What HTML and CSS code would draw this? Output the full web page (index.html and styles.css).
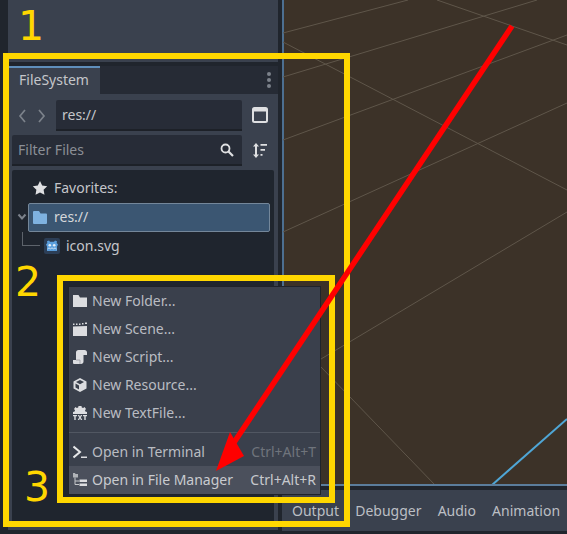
FILE: index.html
```html
<!DOCTYPE html>
<html lang="en">
<head>
<meta charset="utf-8">
<title>Godot FileSystem dock</title>
<link rel="stylesheet" href="styles.css">
</head>
<body>
<div class="app">
  <aside class="left">
    <div class="top-panel"></div>
    <section class="dock">
      <div class="tabbar">
        <div class="tab">FileSystem</div>
        <svg class="kebab" width="4" height="16" viewBox="0 0 4 16"><circle cx="2" cy="2" r="2"/><circle cx="2" cy="8" r="2"/><circle cx="2" cy="14" r="2"/></svg>
      </div>
      <div class="dock-body">
        <div class="path-row">
          <div class="nav">
            <svg width="10" height="16" viewBox="0 0 10 16"><path d="M8 2 3 8l5 6" /></svg>
            <svg width="10" height="16" viewBox="0 0 10 16"><path d="M2 2l5 6-5 6" /></svg>
          </div>
          <div class="field path">res://</div>
          <svg class="tool raise" width="16" height="16" viewBox="0 0 16 16"><rect x="1" y="1" width="14" height="14" rx="1.5" class="win"/><rect x="1" y="1" width="14" height="3.5" class="winbar"/></svg>
        </div>
        <div class="filter-row">
          <div class="field filter"><span>Filter Files</span>
            <svg width="14" height="14" viewBox="0 0 14 14"><circle cx="5.5" cy="5.5" r="4" class="lens"/><path d="M8.5 8.5 13 13" class="handle"/></svg>
          </div>
          <svg class="tool" width="16" height="15" viewBox="0 0 16 15"><path d="M4 0 1 3.500h2v8H1L4 15l3-3.500H5v-8h2z" class="solid"/><path d="M8.500 1h6.500v1.800H8.500zM8.500 6h4.500v1.800H8.500zM8.500 11h2v1.800h-2z" class="solid"/></svg>
        </div>
        <div class="tree">
          <div class="row fav">
            <svg width="16" height="16" viewBox="0 0 16 16"><path d="m8 1 2.200 4.600 5 .7-3.600 3.500.9 5L8 12.400l-4.500 2.400.9-5L.8 6.300l5-.7z" class="solid"/></svg>
            <span>Favorites:</span>
          </div>
          <div class="row root">
            <svg class="chev" width="10" height="8" viewBox="0 0 10 8"><path d="M1.500 1.500 5 5.500l3.500-4"/></svg>
            <div class="selected">
              <svg width="14" height="13" viewBox="0 0 14 13"><path d="M1 0h5l1.500 2.500H13a1 1 0 0 1 1 1V12a1 1 0 0 1-1 1H1a1 1 0 0 1-1-1V1a1 1 0 0 1 1-1z" class="folder"/></svg>
              <span class="lift">res://</span>
            </div>
          </div>
          <div class="row file">
            <div class="branch"></div>
            <div class="godot">
              <svg width="12" height="12" viewBox="0 0 12 12"><path d="M3 .5l1 1.300h4L9 .5l2 .8-.3 1.700L12 4.500 11 6.500V11H1V6.500L0 4.500 1.300 3 1 1.300z" class="gd"/><circle cx="3.800" cy="5.300" r="1.300" class="gd-eye"/><circle cx="8.200" cy="5.300" r="1.300" class="gd-eye"/><path d="M1.500 9c1.500-1.200 2-1.200 3 0 1-1.200 2-1.200 3 0 1-1.200 1.500-1.200 3 0" class="gd-mouth"/></svg>
            </div>
            <span class="lift">icon.svg</span>
          </div>
          <div class="menu">
            <div class="item"><svg width="14" height="14" viewBox="0 0 14 14"><path d="M0 1h5.500l1.500 2.500h7V13H0z" class="mi"/></svg><span>New Folder...</span></div>
            <div class="item"><svg width="14" height="14" viewBox="0 0 14 14"><path d="M0 4.500l14-.5v10H0z" class="mi"/><path d="M0 1.500h1.500V3H0zM3 1.500h1.500V3H3zM6 1.500h1.500V3H6zM9 1h1.500v1.500H9zM12 .5h2V2h-2z" class="mi"/></svg><span>New Scene...</span></div>
            <div class="item"><svg width="14" height="14" viewBox="0 0 14 14"><path d="M5.500 0h6C13 0 14 1 14 2.500V5h-3.500v6.500c0 1.500-1 2.500-2.500 2.500H1.500C.5 14 0 13.500 0 12.500V10h3V2.500C3 1 4 0 5.500 0z" class="mi"/><path d="M3 10h4v4" class="cut"/></svg><span>New Script...</span></div>
            <div class="item"><svg width="14" height="14" viewBox="0 0 14 14"><path d="M7 0 13.500 3.500v7L7 14 .5 10.500v-7zM7 6.200 11 4 7 2 3 4zM2.500 5.600v4L6 11.600V7.500z" class="mi" fill-rule="evenodd"/></svg><span>New Resource...</span></div>
            <div class="item"><svg width="14" height="14" viewBox="0 0 14 14"><path d="M5.500 0h3l.3 1.500 1.400.6L11.500 1 13 3l-1 1.200.4 1.300L14 6v2H0V6l1.600-.5L2 4.200 1 3l1.500-2 1.300 1.100 1.400-.6z" class="mi"/><path d="M0 9h4v1.200H2.700V14H1.300v-3.800H0zM4.700 9h1.500L7 10.800 7.800 9h1.500L7.800 11.500 9.300 14H7.800L7 12.300 6.200 14H4.700l1.500-2.500zM10 9h4v1.200h-1.300V14h-1.400v-3.800H10z" class="mi"/></svg><span>New TextFile...</span></div>
            <div class="sep"></div>
            <div class="item"><svg width="14" height="14" viewBox="0 0 14 14"><path d="M.5 1.500 7 7 .5 12.500" class="term"/><path d="M8 11.500h6V13H8z" class="mi"/></svg><span>Open in Terminal</span><kbd class="off">Ctrl+Alt+T</kbd></div>
            <div class="item active"><svg width="14" height="14" viewBox="0 0 14 14"><path d="M0 0h2l.5 1H5v3.500H0z" class="mi-dim"/><path d="M2 4.500v7h4M2 8h4" class="tline"/><path d="M6.500 6.500H14v2.500H6.500zM6.500 10.500H14V13H6.500z" class="mi"/></svg><span>Open in File Manager</span><kbd>Ctrl+Alt+R</kbd></div>
          </div>
        </div>
      </div>
    </section>
  </aside>
  <main class="right">
    <div class="viewport">
      <svg class="grid" width="284" height="484" viewBox="283 0 284 484">
        <path d="M283 33 408 0M283 77 537 0M283 140 567 35M283 232 567 103M321 359 567 212M437 0 567 45M283 42 567 190M321 367 435 485"/>
        <path class="axis" d="M492 485 567 419"/>
      </svg>
    </div>
    <nav class="bottom">
      <span>Output</span><span>Debugger</span><span>Audio</span><span>Animation</span>
    </nav>
  </main>
</div>
<svg class="marks" width="567" height="534" viewBox="0 0 567 534">
  <rect class="box" x="6" y="56" width="341" height="468"/>
  <rect class="box" x="60" y="278" width="272" height="222"/>
  <path class="arrow-line" d="M512 26 231 447"/>
  <path class="arrow-head" d="M216 471 230 432 244 456z"/>
</svg>
<div class="num n1">1</div>
<div class="num n2">2</div>
<div class="num n3">3</div>
</body>
</html>
```
FILE: styles.css
```css
* { box-sizing: border-box; }
html, body { margin: 0; height: 100%; }
body {
  width: 567px;
  height: 534px;
  overflow: hidden;
  position: relative;
  background: #20252d;
  font-family: "Noto Sans", sans-serif;
  font-size: 14px;
  color: #c4c6ca;
}
svg { display: block; flex: none; }
.app { display: flex; height: 534px; }
.left { width: 282px; padding: 0 4px 4px 8px; display: flex; flex-direction: column; gap: 4px; }
.top-panel { height: 62px; background: #3a414e; }
.dock { flex: 1; display: flex; flex-direction: column; background: #3a414e; min-height: 0; }
.tabbar { height: 28px; background: #262b35; display: flex; justify-content: space-between; align-items: center; padding-right: 7px; flex: none; }
.kebab { fill: #7c828b; }
.tab { width: 92px; height: 28px; background: #3a414e; border-top: 2px solid #5f8fbb; padding: 0 0 0 11px; line-height: 23px; }
.dock-body { flex: 1; display: flex; flex-direction: column; padding: 6px 4px 4px; gap: 4px; min-height: 0; }
.path-row, .filter-row { display: flex; align-items: center; height: 31px; flex: none; }
.nav { width: 44px; display: flex; justify-content: space-between; padding: 0 9px 0 5px; flex: none; }
.nav path { fill: none; stroke: #7c828b; stroke-width: 1.7; }
.field { background: #272c37; border-bottom: 2px solid #1d2128; height: 31px; border-radius: 2px 2px 0 0; display: flex; align-items: center; }
.path { width: 186px; padding-left: 6px; }
.filter { width: 230px; padding: 0 8px 0 6px; justify-content: space-between; color: #8b8f96; }
.tool { margin-left: 10px; }
.raise { margin-bottom: 1px; }
.win { fill: none; stroke: #dfe0e2; stroke-width: 2; }
.winbar { fill: #dfe0e2; }
.lens { fill: none; stroke: #dfe0e2; stroke-width: 1.8; }
.handle { fill: none; stroke: #dfe0e2; stroke-width: 2.2; }
.solid { fill: #dfe0e2; }
.tree { flex: 1; width: 262px; background: #1f252e; border-radius: 2px 2px 0 0; padding-top: 4px; position: relative; }
.row { display: flex; align-items: center; height: 28px; }
.lift { padding-bottom: 2px; }
.fav { padding-left: 20px; gap: 6px; margin-bottom: 1px; padding-bottom: 1px; }
.root { position: relative; height: 29px; padding: 0 4px 0 16px; }
.chev { position: absolute; left: 5px; top: 10px; }
.chev path { fill: none; stroke: #7c828b; stroke-width: 2; }
.selected { flex: 1; height: 29px; background: #3b5672; border: 1px solid #74879a; border-radius: 2px; display: flex; align-items: center; gap: 7px; padding: 0 0 0 4px; color: #d5d7da; }
.folder { fill: #7fb2e0; }
.file { position: relative; padding-left: 32px; gap: 6px; }
.branch { position: absolute; left: 10px; top: 0; width: 18px; height: 14px; border-left: 1px solid #5d636b; border-bottom: 1px solid #5d636b; }
.godot { width: 16px; height: 16px; background: #2c3e56; border-radius: 2px; display: flex; align-items: center; justify-content: center; }
.gd { fill: #5b9fdd; }
.gd-eye { fill: #e4eef8; }
.gd-mouth { fill: none; stroke: #e4eef8; stroke-width: .9; }
.menu { position: absolute; left: 56px; top: 116px; width: 253px; height: 209px; background: #3a404c; border: 1px solid #1f232a; }
.item { height: 28px; display: flex; align-items: center; padding: 0 4px; gap: 5px; color: #b9bcc2; }
.item span { flex: 1; padding-bottom: 2px; }
.item kbd { font: inherit; color: #c7c9cd; padding-bottom: 2px; }
.item kbd.off { color: #6f747c; }
.item.active { background: #4b505c; color: #c9cbcf; }
.sep { height: 1px; background: #515762; margin: 5px 0; }
.mi { fill: #dcdde0; }
.mi-dim { fill: #b0b3b8; }
.cut { fill: none; stroke: #9a9da3; stroke-width: .8; }
.term { fill: none; stroke: #e6e7e9; stroke-width: 2; }
.tline { fill: none; stroke: #c5c7ca; stroke-width: 1; }
.right { flex: 1; display: flex; flex-direction: column; }
.viewport { height: 486px; background: #3c3228; border-left: 2px solid #4d6f90; border-bottom: 2px solid #5b7d9c; flex: none; }
.grid { margin-left: -1px; }
.grid path { fill: none; stroke: #5f564a; stroke-width: 1; }
.grid .axis { stroke: #4fa6d6; stroke-width: 2; }
.bottom { height: 41px; margin-top: 4px; background: #3a414e; display: flex; gap: 16.2px; align-items: center; padding: 0 0 0 10px; white-space: nowrap; overflow: hidden; color: #bcbfc4; }
.marks { position: absolute; left: 0; top: 0; pointer-events: none; }
.box { fill: none; stroke: #ffd700; stroke-width: 6; }
.arrow-line { fill: none; stroke: #ff0000; stroke-width: 5.5; }
.arrow-head { fill: #ff0000; }
.num { position: absolute; color: #ffd700; font-family: "DejaVu Sans", sans-serif; font-size: 41px; line-height: 50px; }
.n1 { left: 18px; top: 1px; }
.n2 { left: 15px; top: 257px; }
.n3 { left: 24px; top: 462px; }
```
